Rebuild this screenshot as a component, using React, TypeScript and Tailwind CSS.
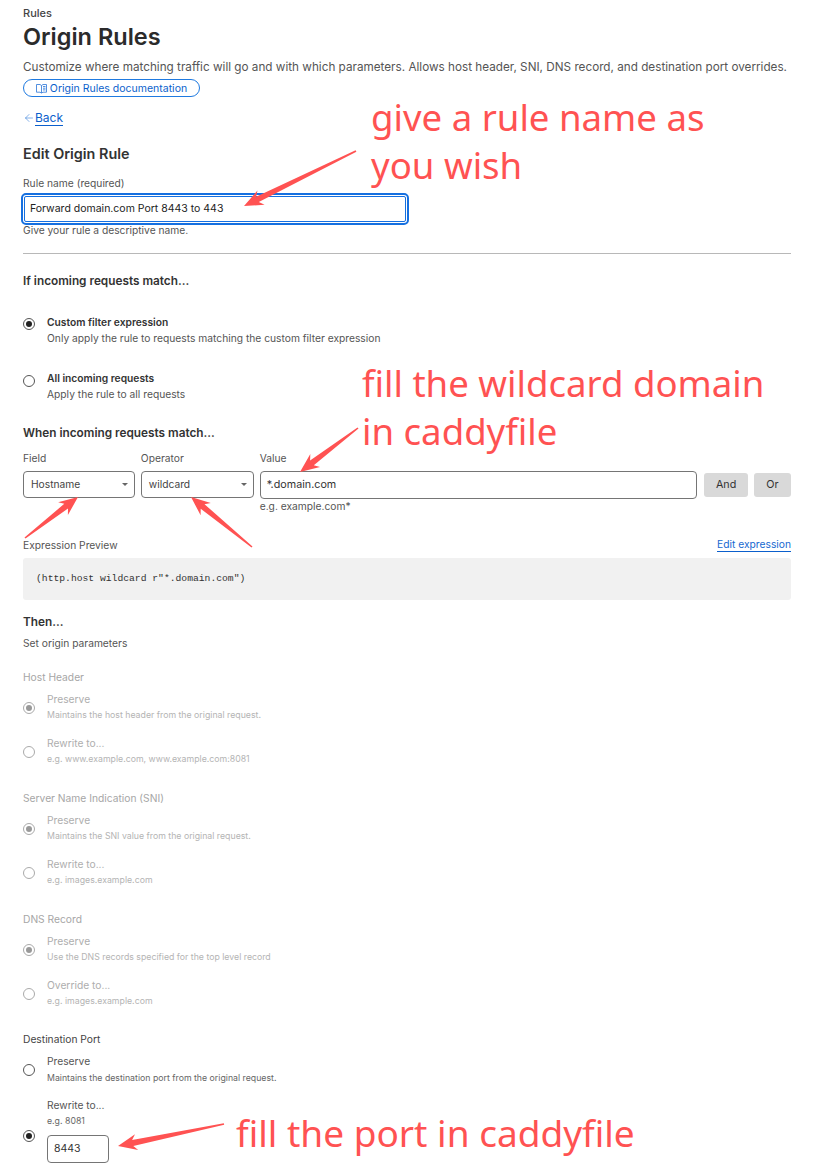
import { ArrowLeft } from 'lucide-react';

function Radio({ checked, muted, className }: { checked?: boolean; muted?: boolean; className?: string }) {
  return (
    <span className={`flex h-3 w-3 shrink-0 items-center justify-center rounded-full border bg-white ${muted ? 'border-[#aaaaaa]' : 'border-[#555555]'} ${className ?? ''}`}>
      {checked && <span className={`h-[6px] w-[6px] rounded-full ${muted ? 'bg-[#999999]' : 'bg-[#222222]'}`} />}
    </span>
  );
}

function MutedOption({ title, sub, checked, className }: { title: string; sub: string; checked?: boolean; className?: string }) {
  return (
    <div className={`flex items-center gap-3 ${className ?? ''}`}>
      <Radio checked={checked} muted />
      <div>
        <div className="h-[16px] text-[10.25px] leading-[16px] text-[#aeaeae]">{title}</div>
        <div className="h-[17px] text-[8.75px] leading-[17px] text-[#b4b4b4]">{sub}</div>
      </div>
    </div>
  );
}

function MutedGroup({ label, first, secondTitle, secondSub, className }: { label: string; first: string; secondTitle: string; secondSub: string; className?: string }) {
  return (
    <div className={className}>
      <div className="h-[16px] text-[10.25px] leading-[16px] text-[#a6a6a6]">{label}</div>
      <MutedOption className="mt-[6px]" title="Preserve" sub={first} checked />
      <MutedOption className="mt-[11px]" title={secondTitle} sub={secondSub} />
    </div>
  );
}

function Select({ value, className }: { value: string; className?: string }) {
  return (
    <div className={`flex h-[27px] items-center justify-between rounded-[4px] border border-[#757575] pl-[7px] pr-[6px] text-[10.25px] text-[#444444] ${className ?? ''}`}>
      <span>{value}</span>
      <span className="h-0 w-0 border-x-[3px] border-t-[3px] border-x-transparent border-t-[#666666]" />
    </div>
  );
}

function Arrow({ x1, y1, x2, y2 }: { x1: number; y1: number; x2: number; y2: number }) {
  // tapered annotation arrow with a barbed head
  const a = Math.atan2(y2 - y1, x2 - x1);
  const pt = (d: number, w: number) => {
    const x = x2 - d * Math.cos(a) - w * Math.sin(a);
    const y = y2 - d * Math.sin(a) + w * Math.cos(a);
    return `${x.toFixed(1)},${y.toFixed(1)}`;
  };
  const len = Math.hypot(x2 - x1, y2 - y1);
  return (
    <polygon
      fill="#ff5252"
      points={`${pt(len, 0.8)} ${pt(15, 3)} ${pt(19, 8)} ${x2},${y2} ${pt(19, -8)} ${pt(15, -3)} ${pt(len, -0.8)}`}
    />
  );
}

function DocIcon() {
  return (
    <svg width="11" height="11" viewBox="0 0 11 11" fill="none" stroke="#3f83dc" strokeWidth="0.9" className="shrink-0">
      <path d="M0.5 1.5h3.5l1.5 1v7.5l-1.5-0.8H0.5z" />
      <path d="M5.5 2.5l1.5-1h3.5v7.7H7l-1.5 0.8" />
      <path d="M7 3.5h2.5M7 5.2h2.5M7 6.9h2.5" />
    </svg>
  );
}

export default function App() {
  return (
    <div className="relative h-[1167px] w-[819px] overflow-hidden bg-white font-['Inter',sans-serif] text-[#313131]">
      <div className="pl-[23px] pr-[28px] pt-[6px]">
        <div className="h-[14px] text-[11px] font-medium leading-[14px] text-[#444444]">Rules</div>
        <h1 className="mt-[2px] h-[30px] text-[23.5px] font-semibold leading-[30px] text-[#2b2b2b]">Origin Rules</h1>
        <p className="mt-[7px] h-[16px] whitespace-nowrap text-[11.73px] leading-[16px] text-[#555555]">
          Customize where matching traffic will go and with which parameters. Allows host header, SNI, DNS record, and destination port overrides.
        </p>
        <a className="mt-[4px] flex h-[18px] w-[177px] items-center justify-center gap-[3px] rounded-full border border-[#1f7ae0] pt-px text-[10.5px] text-[#0b5fcc]">
          <DocIcon />
          Origin Rules documentation
        </a>
        <a className="mt-[13px] flex h-[16px] items-center text-[12px] text-[#0b5fcc]">
          <ArrowLeft size={12} strokeWidth={1.25} className="text-[#3f83dc]" />
          <span className="border-b border-[#0b5fcc] leading-[14px]">Back</span>
        </a>

        <h2 className="mt-[18px] h-[20px] text-[14.4px] font-semibold leading-[20px] text-[#333333]">Edit Origin Rule</h2>
        <label className="mt-[12px] block h-[14px] text-[10.25px] leading-[14px] text-[#555555]">Rule name (required)</label>
        <div className="-ml-[2px] mt-[3px] flex h-[32px] w-[388px] items-center rounded-[5px] border-2 border-[#1670e0] pl-[7px] text-[10.5px] text-[#222222] outline outline-1 outline-offset-[-4px] outline-[#1670e0]">
          Forward domain.com Port 8443 to 443
        </div>
        <p className="-mt-px h-[13px] text-[10.25px] leading-[13px] text-[#555555]">Give your rule a descriptive name.</p>

        <hr className="mt-[16px] w-[768px] border-[#b8b8b8]" />

        <div className="mt-[19px] h-[16px] text-[11.8px] font-semibold leading-[16px] text-[#333333]">If incoming requests match...</div>

        <div className="mt-[25px] flex gap-3">
          <Radio checked className="mt-[4px]" />
          <div>
            <div className="h-[16px] text-[10.25px] font-semibold leading-[16px] text-[#333333]">Custom filter expression</div>
            <div className="h-[16px] text-[10.25px] leading-[16px] text-[#555555]">Only apply the rule to requests matching the custom filter expression</div>
          </div>
        </div>
        <div className="mt-[24px] flex gap-3">
          <Radio className="mt-[5px]" />
          <div>
            <div className="h-[16px] text-[10.25px] font-semibold leading-[16px] text-[#333333]">All incoming requests</div>
            <div className="h-[16px] text-[10.25px] leading-[16px] text-[#555555]">Apply the rule to all requests</div>
          </div>
        </div>

        <div className="mt-[23px] h-[16px] text-[11.8px] font-semibold leading-[16px] text-[#333333]">When incoming requests match...</div>

        <div className="mt-[9px] flex gap-[6px]">
          <div className="w-[112px]">
            <div className="h-[16px] text-[10.25px] leading-[16px] text-[#555555]">Field</div>
            <Select value="Hostname" className="mt-[5px]" />
          </div>
          <div className="w-[113px]">
            <div className="h-[16px] text-[10.25px] leading-[16px] text-[#555555]">Operator</div>
            <Select value="wildcard" className="mt-[5px]" />
          </div>
          <div className="w-[438px]">
            <div className="h-[16px] text-[10.25px] leading-[16px] text-[#555555]">Value</div>
            <div className="mt-[5px] flex h-[28px] items-center rounded-[4px] border border-[#757575] pl-[6px] text-[10.75px] text-[#333333]">*.domain.com</div>
            <div className="h-[14px] text-[10.25px] leading-[14px] text-[#555555]">e.g. example.com*</div>
          </div>
          <button className="ml-px mt-[23px] h-[24px] w-[44px] rounded-[3px] bg-[#d9d9d9] text-[10.75px] text-[#333333]">And</button>
          <button className="mt-[23px] h-[24px] w-[37px] rounded-[3px] bg-[#d9d9d9] text-[10.75px] text-[#333333]">Or</button>
        </div>

        <div className="mt-[24px] flex h-[16px] w-[768px] items-center justify-between text-[10.25px] leading-[16px]">
          <span className="text-[#555555]">Expression Preview</span>
          <a className="border-b border-[#0b5fcc] leading-[13px] text-[#1668d0]">Edit expression</a>
        </div>
        <div className="mt-[5px] flex h-[42px] w-[768px] items-center rounded-[3px] bg-[#f1f1f1] pl-[13px] font-['Liberation_Mono',monospace] text-[9.7px] text-[#333333]">
          (http.host wildcard r"*.domain.com")
        </div>

        <div className="mt-[14px] h-[16px] text-[11.8px] font-semibold leading-[16px] text-[#333333]">Then...</div>
        <div className="mt-[5px] h-[16px] text-[10.25px] leading-[16px] text-[#555555]">Set origin parameters</div>

        <MutedGroup className="mt-[18px]" label="Host Header" first="Maintains the host header from the original request." secondTitle="Rewrite to..." secondSub="e.g. www.example.com, www.example.com:8081" />
        <MutedGroup className="mt-[22px]" label="Server Name Indication (SNI)" first="Maintains the SNI value from the original request." secondTitle="Rewrite to..." secondSub="e.g. images.example.com" />
        <MutedGroup className="mt-[22px]" label="DNS Record" first="Use the DNS records specified for the top level record" secondTitle="Override to..." secondSub="e.g. images.example.com" />

        <div className="mt-[21px] h-[16px] text-[10.25px] leading-[16px] text-[#444444]">Destination Port</div>
        <div className="mt-[6px] flex items-center gap-3">
          <Radio />
          <div>
            <div className="h-[17px] text-[10.25px] leading-[17px] text-[#555555]">Preserve</div>
            <div className="h-[17px] text-[8.75px] leading-[17px] text-[#666666]">Maintains the destination port from the original request.</div>
          </div>
        </div>
        <div className="mt-[10px] flex gap-3">
          <Radio checked className="mt-[33px]" />
          <div>
            <div className="h-[17px] text-[10.25px] leading-[17px] text-[#555555]">Rewrite to...</div>
            <div className="h-[15px] text-[8.75px] leading-[15px] text-[#666666]">e.g. 8081</div>
            <div className="mt-[6px] flex h-[28px] w-[62px] items-center rounded-[4px] border border-[#757575] pl-[6px] text-[10.5px] text-[#333333]">8443</div>
          </div>
        </div>
      </div>

      {/* screenshot annotations drawn over the page */}
      <div className="pointer-events-none absolute left-[371px] top-[93px] font-['Noto_Sans',sans-serif] text-[36.6px] leading-[48px] text-[#ff5252]">
        give a rule name as<br />you wish
      </div>
      <div className="pointer-events-none absolute left-[362px] top-[359px] whitespace-nowrap font-['Noto_Sans',sans-serif] text-[36.6px] leading-[48px] text-[#ff5252]">
        fill the wildcard domain<br />in caddyfile
      </div>
      <div className="pointer-events-none absolute left-[236px] top-[1109px] whitespace-nowrap font-['Noto_Sans',sans-serif] text-[37px] leading-[48px] text-[#ff5252]">
        fill the port in caddyfile
      </div>
      <svg className="pointer-events-none absolute left-0 top-0" width="819" height="1167">
        <Arrow x1={356} y1={151} x2={244} y2={206} />
        <Arrow x1={358} y1={428} x2={300} y2={472} />
        <Arrow x1={25} y1={538} x2={78} y2={497} />
        <Arrow x1={252} y1={547} x2={191} y2={497} />
        <Arrow x1={224} y1={1124} x2={118} y2={1146} />
      </svg>
    </div>
  );
}
